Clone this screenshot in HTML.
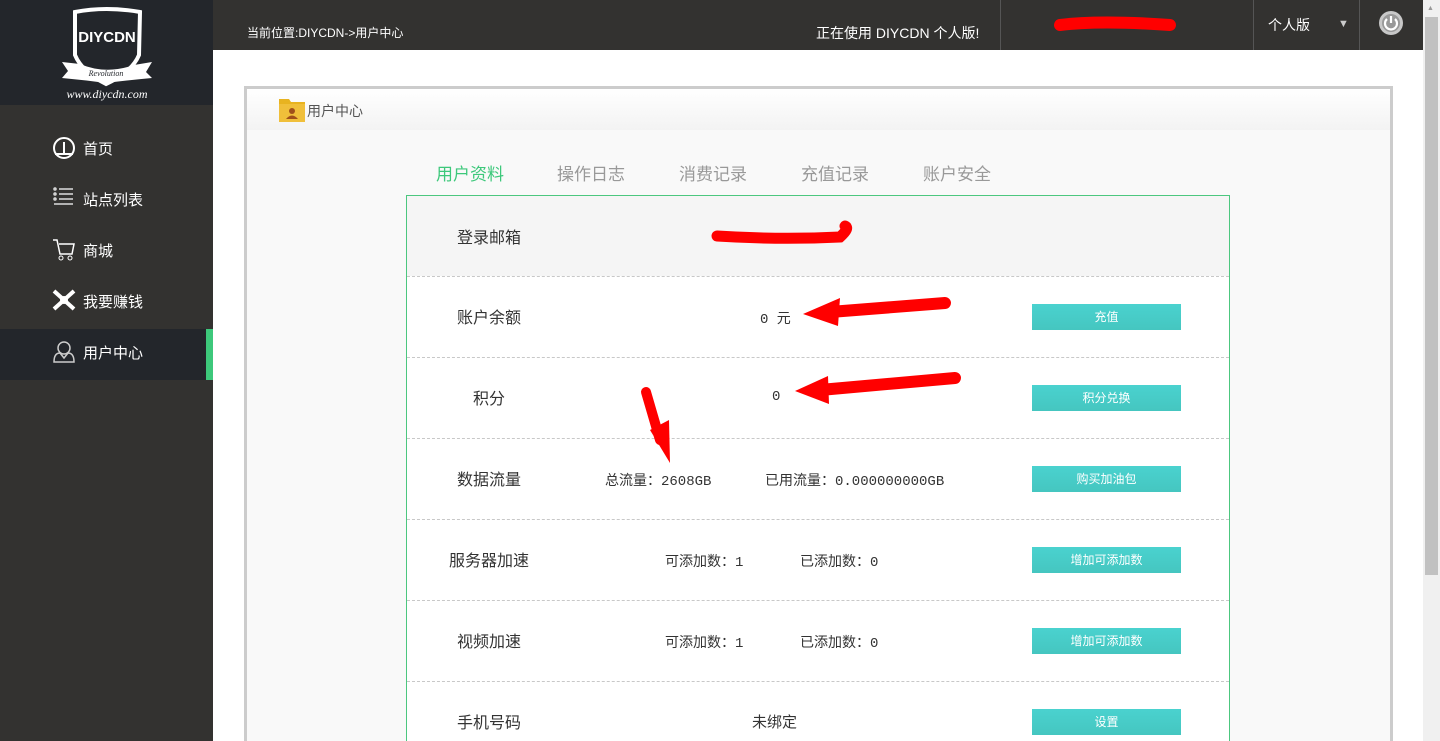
<!DOCTYPE html>
<html><head><meta charset="utf-8">
<style>
*{margin:0;padding:0;box-sizing:border-box}
html,body{width:1440px;height:741px;overflow:hidden}
body{background:#fff;font-family:"Liberation Sans","Noto Sans CJK SC",sans-serif;position:relative;color:#333}
.a{position:absolute}
.side{left:0;top:0;width:213px;height:741px;background:#333230}
.logo{left:0;top:0;width:213px;height:105px;background:#23262b}
.mi{left:0;width:213px;height:51px;color:#fff;font-size:15px}
.mi span{position:absolute;left:83px;top:13px}
.mi svg{position:absolute;left:52px;top:11px}
.top{left:213px;top:0;width:1210px;height:50px;background:#333230;color:#fff}
.sb{left:1423px;top:0;width:17px;height:741px;background:#f0f0f0}
.lab{font-size:16px;color:#333;text-align:center;width:160px;left:409px}
.btn{left:1032px;width:149px;height:26px;background:linear-gradient(#4ad2cf,#45c6c0);color:#fff;font-size:12px;text-align:center;line-height:26px}
.sep{left:407px;width:822px;border-top:1px dashed #c8c8c8;height:0}
.v{font-size:14px;color:#333;font-family:"Liberation Mono","Noto Sans CJK SC",monospace}
.tab{top:160px;font-size:17px;color:#999}
</style></head><body>
<div class="a side"></div>
<div class="a logo">
<svg width="213" height="105" viewBox="0 0 213 105">
<path d="M75 12 Q106 6 140 12 L139 55 Q132 72 106 84 Q82 72 75 55 Z" fill="none" stroke="#fff" stroke-width="4"/>
<text x="107" y="42" fill="#fff" font-size="15" font-weight="bold" text-anchor="middle" font-family="Liberation Sans">DIYCDN</text>
<path d="M62 62 L80 64 Q106 75 134 65 L152 62 L146 72 L152 78 Q130 80 106 83 Q84 80 62 78 L68 71 Z" fill="#fff"/>
<text x="106" y="76" fill="#23262b" font-size="8" font-style="italic" text-anchor="middle" font-family="Liberation Serif">Revolution</text>
<text x="107" y="98" fill="#fff" font-size="12" font-style="italic" text-anchor="middle" font-family="Liberation Serif">www.diycdn.com</text>
</svg></div>
<div class="a mi" style="top:125px"><svg width="24" height="24"><circle cx="12" cy="12" r="10" fill="none" stroke="#fff" stroke-width="2"/><path d="M12 6v12M3 18h18" stroke="#fff" stroke-width="2"/></svg><span>首页</span></div>
<div class="a mi" style="top:176px"><svg width="24" height="24"><g stroke="#ddd" stroke-width="1.5"><path d="M7 2h14M7 7h14M7 12h14M2 17h19"/><circle cx="3" cy="2" r="1"/><circle cx="3" cy="7" r="1"/><circle cx="3" cy="12" r="1"/></g></svg><span>站点列表</span></div>
<div class="a mi" style="top:227px"><svg width="24" height="26"><path d="M1 2h4l3 14h12l2-10H7" fill="none" stroke="#fff" stroke-width="1.5"/><circle cx="9" cy="20" r="2" fill="none" stroke="#fff"/><circle cx="18" cy="20" r="2" fill="none" stroke="#fff"/></svg><span>商城</span></div>
<div class="a mi" style="top:278px"><svg width="24" height="24"><path d="M2 2l20 18M22 2L2 20" stroke="#fff" stroke-width="4"/><circle cx="12" cy="11" r="4" fill="#fff"/></svg><span>我要赚钱</span></div>
<div class="a mi" style="top:329px;background:#23262b"><svg width="24" height="24"><circle cx="12" cy="8" r="6" fill="none" stroke="#ccc" stroke-width="1.5"/><path d="M2 22 Q2 13 8 13 L12 18 L16 13 Q22 13 22 22 Z" fill="none" stroke="#ccc" stroke-width="1.5"/></svg><span>用户中心</span></div>
<div class="a" style="left:206px;top:329px;width:7px;height:51px;background:#3dc87b"></div>

<div class="a top">
<div class="a" style="left:34px;top:24px;font-size:12px">当前位置:DIYCDN-&gt;用户中心</div>
<div class="a" style="left:603px;top:23px;font-size:14px">正在使用 DIYCDN 个人版!</div>
<div class="a" style="left:787px;top:0;width:1px;height:50px;background:#555"></div>
<div class="a" style="left:1040px;top:0;width:1px;height:50px;background:#555"></div>
<div class="a" style="left:1146px;top:0;width:1px;height:50px;background:#555"></div>
<div class="a" style="left:1055px;top:15px;font-size:14px">个人版</div>
<div class="a" style="left:1125px;top:18px;font-size:11px;color:#ccc">▼</div>
<svg class="a" style="left:1165px;top:10px" width="26" height="26"><circle cx="13" cy="13" r="12" fill="#c8c8c8"/><circle cx="13" cy="13" r="9" fill="#999"/><path d="M9 9a6 6 0 1 0 8 0" fill="none" stroke="#fff" stroke-width="2.2"/><path d="M13 6v7" stroke="#fff" stroke-width="2.2"/></svg>
</div>
<svg class="a" style="left:1050px;top:12px" width="135" height="25"><path d="M10 13 Q50 8 120 13" stroke="#f00" stroke-width="12" stroke-linecap="round" fill="none"/></svg>

<div class="a" style="left:244px;top:86px;width:1149px;height:660px;border:3px solid #ccc;border-width:3px 3px 0 3px;background:#f9f9f9"></div>
<div class="a" style="left:247px;top:89px;width:1143px;height:41px;background:linear-gradient(#fff,#f3f3f3)"></div>
<svg class="a" style="left:278px;top:96px" width="28" height="28"><path d="M1 3h10l2 3h14v20H1z" fill="#e8b320"/><rect x="1" y="8" width="26" height="18" fill="#f0bf3a"/><circle cx="14" cy="15" r="3" fill="#a0501a"/><path d="M8 23 Q14 16 20 23z" fill="#a0501a"/></svg>
<div class="a" style="left:307px;top:101px;font-size:14px;color:#555">用户中心</div>

<div class="a tab" style="left:436px;color:#3dc87b">用户资料</div>
<div class="a tab" style="left:557px">操作日志</div>
<div class="a tab" style="left:679px">消费记录</div>
<div class="a tab" style="left:801px">充值记录</div>
<div class="a tab" style="left:923px">账户安全</div>

<div class="a" style="left:406px;top:195px;width:824px;height:560px;border:1px solid #4cc77f;background:#fff"></div>
<div class="a" style="left:407px;top:196px;width:822px;height:80px;background:#f5f5f5"></div>
<div class="a sep" style="top:276px"></div>
<div class="a sep" style="top:357px"></div>
<div class="a sep" style="top:438px"></div>
<div class="a sep" style="top:519px"></div>
<div class="a sep" style="top:600px"></div>
<div class="a sep" style="top:681px"></div>

<div class="a lab" style="top:224px">登录邮箱</div>
<div class="a lab" style="top:304px">账户余额</div>
<div class="a lab" style="top:385px">积分</div>
<div class="a lab" style="top:466px">数据流量</div>
<div class="a lab" style="top:547px">服务器加速</div>
<div class="a lab" style="top:628px">视频加速</div>
<div class="a lab" style="top:709px">手机号码</div>

<div class="a v" style="left:760px;top:308px">0 元</div>
<div class="a v" style="left:772px;top:389px">0</div>
<div class="a v" style="left:605px;top:470px">总流量：2608GB</div>
<div class="a v" style="left:765px;top:470px">已用流量：0.000000000GB</div>
<div class="a v" style="left:665px;top:551px">可添加数：1</div>
<div class="a v" style="left:800px;top:551px">已添加数：0</div>
<div class="a v" style="left:665px;top:632px">可添加数：1</div>
<div class="a v" style="left:800px;top:632px">已添加数：0</div>
<div class="a v" style="left:752px;top:711px;font-size:15px">未绑定</div>

<div class="a btn" style="top:304px">充值</div>
<div class="a btn" style="top:385px">积分兑换</div>
<div class="a btn" style="top:466px">购买加油包</div>
<div class="a btn" style="top:547px">增加可添加数</div>
<div class="a btn" style="top:628px">增加可添加数</div>
<div class="a btn" style="top:709px">设置</div>

<svg class="a" style="left:0;top:0" width="1440" height="741" pointer-events="none">
<g stroke="#f00" stroke-linecap="round" fill="none">
<path d="M717 236 Q780 240 840 237 Q850 228 845 226" stroke-width="11"/>
<path d="M945 303 L830 312" stroke-width="12"/>
<path d="M955 378 L820 390" stroke-width="12"/>
<path d="M646 392 L660 440" stroke-width="10"/>
</g>
<g fill="#f00">
<path d="M803 314 L840 298 L838 326 Z"/>
<path d="M795 391 L828 376 L829 404 Z"/>
<path d="M650 430 L669 420 L670 463 Z"/>
</g>
</svg>

<div class="a sb"><div class="a" style="left:2px;top:17px;width:13px;height:558px;background:#c1c1c1"></div>
<div class="a" style="left:4px;top:5px;font-size:7px;color:#999">▲</div></div>
</body></html>
